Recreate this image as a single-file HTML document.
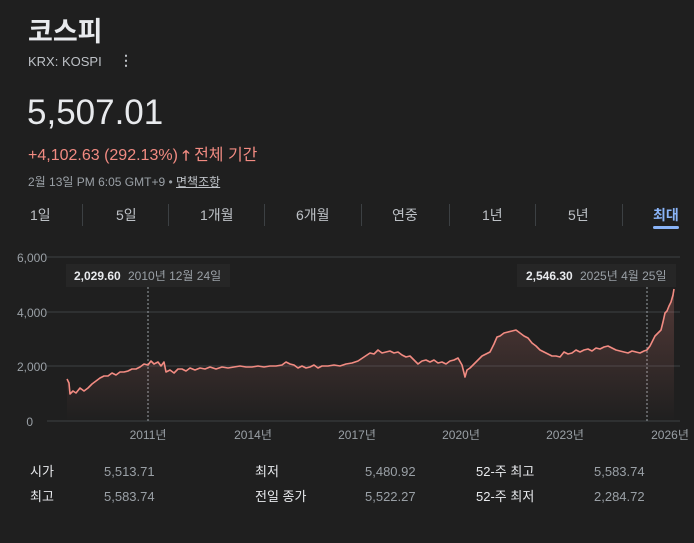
<!DOCTYPE html>
<html><head><meta charset="utf-8"><style>
body{margin:0;background:#1f1f1f;width:694px;height:543px;overflow:hidden;font-family:"Liberation Sans","Noto Sans CJK KR",sans-serif;color:#e8eaed;position:relative}
.a{position:absolute;white-space:nowrap}
.tab{position:absolute;top:205px;font-size:14px;color:#bdc1c6}
.div{position:absolute;top:204px;width:1px;height:22px;background:#3c4043}
.st{position:absolute;font-size:13px;line-height:16px}
.l{color:#e8eaed}.v{color:#9aa0a6}
</style></head><body>
<div class="a" style="left:28px;top:10px;font-size:27px;font-weight:bold">코스피</div>
<div class="a" style="left:28px;top:54px;font-size:13px;color:#bdc1c6">KRX: KOSPI</div>
<div class="a" style="left:119px;top:52px;font-size:14px;font-weight:bold;color:#bdc1c6">⋮</div>
<div class="a" style="left:27px;top:93px;font-size:35px;color:#e8eaed">5,507.01</div>
<div class="a" style="left:28px;top:141px;font-size:16px;color:#f28b82">+4,102.63 (292.13%) <b style="font-size:14px">🡑</b> 전체 기간</div>
<div class="a" style="left:28px;top:173px;font-size:12px;color:#9aa0a6">2월 13일 PM 6:05 GMT+9 • <span style="text-decoration:underline;color:#bdc1c6">면책조항</span></div>
<div class="tab" style="left:30px">1일</div>
<div class="tab" style="left:116px">5일</div>
<div class="tab" style="left:200px">1개월</div>
<div class="tab" style="left:296px">6개월</div>
<div class="tab" style="left:392px">연중</div>
<div class="tab" style="left:482px">1년</div>
<div class="tab" style="left:568px">5년</div>
<div class="tab" style="left:653px;color:#8ab4f8;font-weight:bold">최대</div>
<div class="div" style="left:82px"></div><div class="div" style="left:168px"></div><div class="div" style="left:264px"></div><div class="div" style="left:361px"></div><div class="div" style="left:449px"></div><div class="div" style="left:535px"></div><div class="div" style="left:622px"></div>
<div class="a" style="left:653px;top:226px;width:26px;height:3px;border-radius:2px;background:#8ab4f8"></div>
<svg class="a" style="left:0;top:240px" width="694" height="203" viewBox="0 240 694 203">
<defs><linearGradient id="g" x1="0" y1="0" x2="0" y2="1"><stop offset="0" stop-color="#f28b82" stop-opacity=".25"/><stop offset="1" stop-color="#f28b82" stop-opacity="0"/></linearGradient></defs>
<g stroke="#3c4043" stroke-width="1"><line x1="47" y1="257" x2="680" y2="257"/><line x1="47" y1="312" x2="680" y2="312"/><line x1="47" y1="366" x2="680" y2="366"/><line x1="47" y1="421" x2="680" y2="421"/></g>
<g fill="#9aa0a6" font-size="12" font-family="Liberation Sans,Noto Sans CJK KR,sans-serif" text-anchor="end"><text x="47" y="262">6,000</text><text x="47" y="317">4,000</text><text x="47" y="371">2,000</text><text x="33" y="426">0</text></g>
<g fill="#9aa0a6" font-size="12" font-family="Liberation Sans,Noto Sans CJK KR,sans-serif" text-anchor="middle"><text x="148" y="439">2011년</text><text x="253" y="439">2014년</text><text x="357" y="439">2017년</text><text x="461" y="439">2020년</text><text x="565" y="439">2023년</text><text x="670" y="439">2026년</text></g>
<g stroke="#9aa0a6" stroke-dasharray="2,2" stroke-width="1"><line x1="148" y1="287" x2="148" y2="421"/><line x1="647" y1="287" x2="647" y2="421"/></g>
<polygon fill="url(#g)" points="67,379 69,383 70,394 73,391 76,393 80,388 84,391 88,388 92,384 96,381 100,378 104,376 108,376 112,373 116,375 120,372 124,372 128,371 132,369 136,369 140,367 144,364 148,365 151,361 154,364 158,362 161,366 164,362 166,372 170,370 174,373 178,369 182,369 186,371 190,368 195,370 200,368 205,369 210,367 216,369 222,367 228,368 234,367 240,366 246,367 252,367 258,366 264,367 270,366 276,366 282,365 286,362 290,364 294,365 298,368 302,366 306,368 310,367 314,365 318,368 322,366 328,366 334,365 340,366 346,364 352,363 358,361 364,357 370,353 374,354 378,350 382,353 386,352 390,351 394,353 398,352 402,355 406,357 410,356 414,360 418,364 422,361 426,360 430,362 434,360 438,363 442,362 446,364 450,361 454,360 458,358 462,365 465,377 467,370 470,368 474,364 478,360 482,356 486,354 490,352 494,344 497,337 500,336 504,333 508,332 512,331 516,330 520,333 524,336 528,338 532,343 536,346 540,350 544,352 548,354 552,356 556,356 560,357 564,352 568,354 572,353 576,350 580,352 584,350 588,349 592,351 596,348 600,349 604,347 608,346 612,348 616,350 620,351 624,352 628,353 632,351 636,352 640,353 644,351 647,350 650,346 652,342 655,336 658,333 661,330 663,322 665,313 667,311 669,306 671,302 673,295 674,289 674,421 67,421"/>
<polyline fill="none" stroke="#f28b82" stroke-width="1.6" stroke-linejoin="round" points="67,379 69,383 70,394 73,391 76,393 80,388 84,391 88,388 92,384 96,381 100,378 104,376 108,376 112,373 116,375 120,372 124,372 128,371 132,369 136,369 140,367 144,364 148,365 151,361 154,364 158,362 161,366 164,362 166,372 170,370 174,373 178,369 182,369 186,371 190,368 195,370 200,368 205,369 210,367 216,369 222,367 228,368 234,367 240,366 246,367 252,367 258,366 264,367 270,366 276,366 282,365 286,362 290,364 294,365 298,368 302,366 306,368 310,367 314,365 318,368 322,366 328,366 334,365 340,366 346,364 352,363 358,361 364,357 370,353 374,354 378,350 382,353 386,352 390,351 394,353 398,352 402,355 406,357 410,356 414,360 418,364 422,361 426,360 430,362 434,360 438,363 442,362 446,364 450,361 454,360 458,358 462,365 465,377 467,370 470,368 474,364 478,360 482,356 486,354 490,352 494,344 497,337 500,336 504,333 508,332 512,331 516,330 520,333 524,336 528,338 532,343 536,346 540,350 544,352 548,354 552,356 556,356 560,357 564,352 568,354 572,353 576,350 580,352 584,350 588,349 592,351 596,348 600,349 604,347 608,346 612,348 616,350 620,351 624,352 628,353 632,351 636,352 640,353 644,351 647,350 650,346 652,342 655,336 658,333 661,330 663,322 665,313 667,311 669,306 671,302 673,295 674,289"/>
<rect x="66" y="264" width="164" height="23" fill="#262626"/>
<rect x="517" y="264" width="159" height="23" fill="#262626"/>
<g font-size="12" font-family="Liberation Sans,Noto Sans CJK KR,sans-serif"><text x="74" y="280" fill="#e8eaed" font-weight="bold">2,029.60</text><text x="128" y="280" fill="#9aa0a6">2010년 12월 24일</text>
<text x="526" y="280" fill="#e8eaed" font-weight="bold">2,546.30</text><text x="580" y="280" fill="#9aa0a6">2025년 4월 25일</text></g>
</svg>
<div class="st l" style="left:30px;top:464px">시가</div><div class="st v" style="left:104px;top:464px">5,513.71</div>
<div class="st l" style="left:255px;top:464px">최저</div><div class="st v" style="left:365px;top:464px">5,480.92</div>
<div class="st l" style="left:476px;top:464px">52-주 최고</div><div class="st v" style="left:594px;top:464px">5,583.74</div>
<div class="st l" style="left:30px;top:489px">최고</div><div class="st v" style="left:104px;top:489px">5,583.74</div>
<div class="st l" style="left:255px;top:489px">전일 종가</div><div class="st v" style="left:365px;top:489px">5,522.27</div>
<div class="st l" style="left:476px;top:489px">52-주 최저</div><div class="st v" style="left:594px;top:489px">2,284.72</div>
</body></html>
